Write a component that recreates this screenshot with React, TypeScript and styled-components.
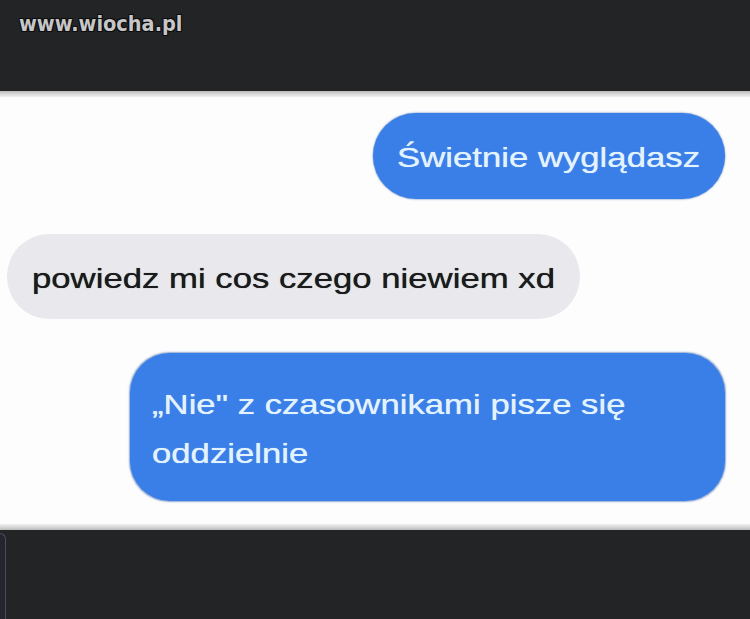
import React from "react";
import styled, { createGlobalStyle } from "styled-components";

const GlobalStyle = createGlobalStyle`
  html, body {
    margin: 0;
    padding: 0;
    background: #222425;
  }
  * { box-sizing: border-box; }
`;

const Frame = styled.div`
  width: 750px;
  height: 619px;
  display: flex;
  flex-direction: column;
  background: #222425;
  overflow: hidden;
`;

const TopBar = styled.header`
  height: 91px;
  flex: none;
  display: flex;
  align-items: flex-start;
  padding: 11px 0 0 19px;
  background: #222425;
`;

const Watermark = styled.span`
  font-family: "DejaVu Sans Condensed", "DejaVu Sans", Verdana, sans-serif;
  font-stretch: condensed;
  font-weight: bold;
  font-size: 21.5px;
  color: #c6c6c8;
  text-shadow:
    -1px -1px 0 #0c0c0c, 1px -1px 0 #0c0c0c,
    -1px 1px 0 #0c0c0c, 1px 1px 0 #0c0c0c,
    0 1px 0 #0c0c0c, 0 -1px 0 #0c0c0c;
`;

const Edge = styled.div<{ $top?: boolean }>`
  flex: none;
  height: 6px;
  background: ${(p) =>
    p.$top
      ? "linear-gradient(#b9bab9, #d8d8d8 50%, #f0f0f0)"
      : "linear-gradient(#f0f0f0, #d8d8d8 50%, #b9bab9)"};
`;

const Chat = styled.main`
  flex: none;
  height: 427px;
  background: #fdfdfd;
  display: flex;
  flex-direction: column;
  padding: 16px 25px 0 7px;
`;

const Bubble = styled.div<{
  $side: "left" | "right";
  $w: number;
  $h: number;
  $r: number;
  $mt: number;
  $pad: string;
}>`
  flex: none;
  align-self: ${(p) => (p.$side === "right" ? "flex-end" : "flex-start")};
  width: ${(p) => p.$w}px;
  height: ${(p) => p.$h}px;
  margin-top: ${(p) => p.$mt}px;
  border-radius: ${(p) => p.$r}px;
  padding: ${(p) => p.$pad};
  display: flex;
  align-items: ${(p) => (p.$h > 100 ? "flex-start" : "center")};
  background: ${(p) => (p.$side === "right" ? "#3a7fe7" : "#e9e9ed")};
  color: ${(p) => (p.$side === "right" ? "#e2f3ff" : "#1b1b1d")};
  box-shadow: ${(p) =>
    p.$side === "right" ? "0 0 1.5px 0.5px rgba(40,90,170,0.5)" : "none"};
`;

const Text = styled.span<{ $max?: number }>`
  display: inline-block;
  font-family: "Liberation Sans", Arial, Helvetica, sans-serif;
  font-size: 28px;
  line-height: 49px;
  white-space: ${(p) => (p.$max ? "normal" : "nowrap")};
  max-width: ${(p) => (p.$max ? `${p.$max}px` : "none")};
  transform: scaleX(1.24);
  transform-origin: left center;
  text-shadow: 0 0 0.6px currentColor;
`;

const BottomBar = styled.footer`
  flex: 1;
  display: flex;
  background: #222425;
  padding-top: 3px;
`;

const SideTab = styled.div`
  flex: none;
  width: 6px;
  background: #26252f;
  border-top: 1.5px solid #4d4b5e;
  border-right: 1.5px solid #4d4b5e;
  border-top-right-radius: 8px;
`;

export default function App() {
  return (
    <>
      <GlobalStyle />
      <Frame>
        <TopBar>
          <Watermark>www.wiocha.pl</Watermark>
        </TopBar>
        <Edge $top />
        <Chat>
          <Bubble $side="right" $w={352} $h={86} $r={43} $mt={0} $pad="3px 0 0 24px">
            <Text>Świetnie wyglądasz</Text>
          </Bubble>
          <Bubble $side="left" $w={573} $h={85} $r={42} $mt={35} $pad="3px 0 0 25px">
            <Text>powiedz mi cos czego niewiem xd</Text>
          </Bubble>
          <Bubble $side="right" $w={595} $h={148} $r={40} $mt={34} $pad="27px 0 0 22px">
            <Text $max={440}>„Nie" z czasownikami pisze się oddzielnie</Text>
          </Bubble>
        </Chat>
        <Edge />
        <BottomBar>
          <SideTab />
        </BottomBar>
      </Frame>
    </>
  );
}
